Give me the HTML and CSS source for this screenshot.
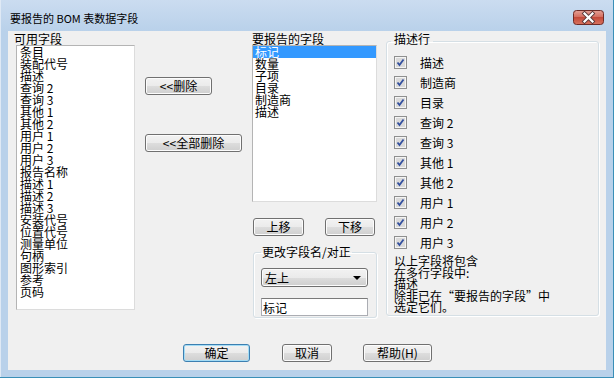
FILE: index.html
```html
<!DOCTYPE html>
<html lang="zh-CN">
<head>
    <meta charset="UTF-8">
    <title>要报告的 BOM 表数据字段</title>
    <link rel="stylesheet" href="styles.css">
</head>
<body>
    <div class="window">
        <div class="titlebar">
            <span class="title">要报告的 BOM 表数据字段</span>
            <button class="close-btn" type="button" aria-label="关闭">
                <svg width="31" height="15" viewBox="0 0 31 15">
                    <defs>
                        <linearGradient id="closeGrad" x1="0" y1="0" x2="0" y2="1">
                            <stop offset="0" stop-color="#e5a196"/>
                            <stop offset="0.45" stop-color="#d46f61"/>
                            <stop offset="0.5" stop-color="#c44a3a"/>
                            <stop offset="1" stop-color="#d8735f"/>
                        </linearGradient>
                    </defs>
                    <rect x="0.5" y="0.5" width="30" height="14" rx="3" fill="url(#closeGrad)" stroke="#6e2b26"/>
                    <path d="M11.5 3.5 L19.5 11.5 M19.5 3.5 L11.5 11.5" stroke="#5a3a3a" stroke-width="4" stroke-linecap="square"/>
                    <path d="M11.5 3.5 L19.5 11.5 M19.5 3.5 L11.5 11.5" stroke="#ffffff" stroke-width="2.2" stroke-linecap="square"/>
                </svg>
            </button>
        </div>

        <div class="client">
            <div class="main">
                <div class="col col-avail">
                    <div class="caption">可用字段</div>
                    <ul class="listbox avail-list">
                        <li>条目</li>
                        <li>装配代号</li>
                        <li>描述</li>
                        <li>查询 2</li>
                        <li>查询 3</li>
                        <li>其他 1</li>
                        <li>其他 2</li>
                        <li>用户 1</li>
                        <li>用户 2</li>
                        <li>用户 3</li>
                        <li>报告名称</li>
                        <li>描述 1</li>
                        <li>描述 2</li>
                        <li>描述 3</li>
                        <li>安装代号</li>
                        <li>位置代号</li>
                        <li>测量单位</li>
                        <li>句柄</li>
                        <li>图形索引</li>
                        <li>参考</li>
                        <li>页码</li>
                    </ul>
                </div>

                <div class="col col-actions">
                    <button class="btn btn-remove" type="button">&lt;&lt;删除</button>
                    <button class="btn btn-remove-all" type="button">&lt;&lt;全部删除</button>
                </div>

                <div class="col col-report">
                    <div class="caption">要报告的字段</div>
                    <ul class="listbox report-list">
                        <li class="selected">标记</li>
                        <li>数量</li>
                        <li>子项</li>
                        <li>目录</li>
                        <li>制造商</li>
                        <li>描述</li>
                    </ul>
                    <div class="move-row">
                        <button class="btn btn-up" type="button">上移</button>
                        <button class="btn btn-down" type="button">下移</button>
                    </div>
                    <fieldset class="group rename-group">
                        <legend>更改字段名/对正</legend>
                        <div class="combo">
                            <span>左上</span>
                            <span class="combo-arrow"></span>
                        </div>
                        <input class="textbox" type="text" value="标记">
                    </fieldset>
                </div>

                <fieldset class="group desc-group">
                    <legend>描述行</legend>
                    <ul class="check-list">
                        <li><svg class="check" width="13" height="13" viewBox="0 0 13 13"><rect x="0.5" y="0.5" width="12" height="12" fill="#f4f4f4" stroke="#8e8f8f"/><rect x="2" y="2" width="9" height="9" fill="#dadada"/><path d="M3.5 6.5 L5.5 9 L9.5 3.5" fill="none" stroke="#324f9e" stroke-width="1.8"/></svg>描述</li>
                        <li><svg class="check" width="13" height="13" viewBox="0 0 13 13"><rect x="0.5" y="0.5" width="12" height="12" fill="#f4f4f4" stroke="#8e8f8f"/><rect x="2" y="2" width="9" height="9" fill="#dadada"/><path d="M3.5 6.5 L5.5 9 L9.5 3.5" fill="none" stroke="#324f9e" stroke-width="1.8"/></svg>制造商</li>
                        <li><svg class="check" width="13" height="13" viewBox="0 0 13 13"><rect x="0.5" y="0.5" width="12" height="12" fill="#f4f4f4" stroke="#8e8f8f"/><rect x="2" y="2" width="9" height="9" fill="#dadada"/><path d="M3.5 6.5 L5.5 9 L9.5 3.5" fill="none" stroke="#324f9e" stroke-width="1.8"/></svg>目录</li>
                        <li><svg class="check" width="13" height="13" viewBox="0 0 13 13"><rect x="0.5" y="0.5" width="12" height="12" fill="#f4f4f4" stroke="#8e8f8f"/><rect x="2" y="2" width="9" height="9" fill="#dadada"/><path d="M3.5 6.5 L5.5 9 L9.5 3.5" fill="none" stroke="#324f9e" stroke-width="1.8"/></svg>查询 2</li>
                        <li><svg class="check" width="13" height="13" viewBox="0 0 13 13"><rect x="0.5" y="0.5" width="12" height="12" fill="#f4f4f4" stroke="#8e8f8f"/><rect x="2" y="2" width="9" height="9" fill="#dadada"/><path d="M3.5 6.5 L5.5 9 L9.5 3.5" fill="none" stroke="#324f9e" stroke-width="1.8"/></svg>查询 3</li>
                        <li><svg class="check" width="13" height="13" viewBox="0 0 13 13"><rect x="0.5" y="0.5" width="12" height="12" fill="#f4f4f4" stroke="#8e8f8f"/><rect x="2" y="2" width="9" height="9" fill="#dadada"/><path d="M3.5 6.5 L5.5 9 L9.5 3.5" fill="none" stroke="#324f9e" stroke-width="1.8"/></svg>其他 1</li>
                        <li><svg class="check" width="13" height="13" viewBox="0 0 13 13"><rect x="0.5" y="0.5" width="12" height="12" fill="#f4f4f4" stroke="#8e8f8f"/><rect x="2" y="2" width="9" height="9" fill="#dadada"/><path d="M3.5 6.5 L5.5 9 L9.5 3.5" fill="none" stroke="#324f9e" stroke-width="1.8"/></svg>其他 2</li>
                        <li><svg class="check" width="13" height="13" viewBox="0 0 13 13"><rect x="0.5" y="0.5" width="12" height="12" fill="#f4f4f4" stroke="#8e8f8f"/><rect x="2" y="2" width="9" height="9" fill="#dadada"/><path d="M3.5 6.5 L5.5 9 L9.5 3.5" fill="none" stroke="#324f9e" stroke-width="1.8"/></svg>用户 1</li>
                        <li><svg class="check" width="13" height="13" viewBox="0 0 13 13"><rect x="0.5" y="0.5" width="12" height="12" fill="#f4f4f4" stroke="#8e8f8f"/><rect x="2" y="2" width="9" height="9" fill="#dadada"/><path d="M3.5 6.5 L5.5 9 L9.5 3.5" fill="none" stroke="#324f9e" stroke-width="1.8"/></svg>用户 2</li>
                        <li><svg class="check" width="13" height="13" viewBox="0 0 13 13"><rect x="0.5" y="0.5" width="12" height="12" fill="#f4f4f4" stroke="#8e8f8f"/><rect x="2" y="2" width="9" height="9" fill="#dadada"/><path d="M3.5 6.5 L5.5 9 L9.5 3.5" fill="none" stroke="#324f9e" stroke-width="1.8"/></svg>用户 3</li>
                    </ul>
                    <p class="note">以上字段将包含<br>在多行字段中:<br>描述<br>除非已在“要报告的字段”中<br>选定它们。</p>
                </fieldset>
            </div>

            <div class="footer">
                <button class="btn btn-ok" type="button">确定</button>
                <button class="btn btn-cancel" type="button">取消</button>
                <button class="btn btn-help" type="button">帮助(H)</button>
            </div>
        </div>
    </div>
</body>
</html>
```

FILE: styles.css
```css
* {
    box-sizing: border-box;
}

body {
    margin: 0;
    font-family: "Noto Sans CJK SC", "Liberation Sans", sans-serif;
    font-size: 12px;
    color: #000;
}

.window {
    width: 614px;
    height: 378px;
    padding: 0 7px 7px 8px;
    background: linear-gradient(to bottom, #cbdcf0, #b9d1ea 31px, #b9d1ea);
    border-right: 1px solid #3a8fb7;
    border-bottom: 1px solid #3a8fb7;
    box-shadow: inset 1px 0 0 #dfe9f5;
}

.titlebar {
    height: 31px;
    display: flex;
    align-items: flex-start;
    justify-content: space-between;
}

.title {
    margin: 12px 0 0 2px;
    font-size: 11px;
    line-height: 13px;
}

.close-btn {
    margin: 10px 2px 0 0;
    padding: 0;
    width: 31px;
    height: 15px;
    border: none;
    background: none;
    display: block;
}

.close-btn svg {
    display: block;
}

.client {
    height: 339px;
    background-color: #f0f0f0;
}

.main {
    height: 313px;
    display: flex;
    align-items: flex-start;
    padding-left: 6px;
}

.col {
    display: flex;
    flex-direction: column;
}

.caption {
    margin-top: 2px;
    line-height: 12px;
    height: 12px;
    white-space: nowrap;
}

.listbox {
    margin: 0;
    padding: 0;
    list-style: none;
    background-color: #fff;
    border: 1px solid #b4b4b4;
    border-right-color: #dcdcdc;
    border-bottom-color: #dcdcdc;
}

.listbox li {
    line-height: 12px;
    height: 12px;
    white-space: nowrap;
}

.avail-list {
    margin-left: 2px;
    width: 119px;
    height: 265px;
}

.avail-list li {
    padding-left: 3px;
}

/* buttons */
.btn {
    font-family: inherit;
    font-size: 12px;
    line-height: 14px;
    height: 18px;
    padding: 0;
    color: #000;
    border: 1px solid #707070;
    border-radius: 3px;
    background: linear-gradient(to bottom, #f2f2f2 0%, #ebebeb 50%, #dddddd 51%, #cfcfcf 100%);
    box-shadow: inset 0 0 0 1px #fcfcfc;
}

.col-actions {
    margin-left: 10px;
    padding-top: 46px;
}

.btn-remove {
    width: 67px;
}

.btn-remove-all {
    width: 97px;
    margin-top: 39px;
}

.col-report {
    margin-left: 10px;
    width: 125px;
}

.report-list {
    width: 125px;
    height: 157px;
}

.report-list li {
    padding-left: 2px;
}

.report-list li.selected {
    background-color: #3399ff;
    color: #fff;
}

.move-row {
    display: flex;
    margin-top: 16px;
}

.btn-up {
    width: 51px;
    margin-left: 1px;
}

.btn-down {
    width: 50px;
    margin-left: 21px;
}

/* group boxes */
.group {
    margin: 0;
    min-width: 0;
    border: 1px solid #d5dfe5;
    border-radius: 3px;
    box-shadow: 1px 1px 0 #ffffff, inset 1px 1px 0 #ffffff;
}

.group legend {
    line-height: 12px;
    white-space: nowrap;
}

.rename-group {
    width: 124px;
    margin: 10px 0 0 1px;
    padding: 10px 0 1px 7px;
}

.rename-group legend {
    padding: 0 1px;
}

.combo {
    width: 107px;
    height: 19px;
    display: flex;
    align-items: center;
    justify-content: space-between;
    padding: 0 6px 0 3px;
    border: 1px solid #707070;
    border-radius: 3px;
    background: linear-gradient(to bottom, #f2f2f2 0%, #ebebeb 50%, #dddddd 51%, #cfcfcf 100%);
    box-shadow: inset 0 0 0 1px #fcfcfc;
}

.combo-arrow {
    width: 0;
    height: 0;
    border-left: 4px solid transparent;
    border-right: 4px solid transparent;
    border-top: 4px solid #000;
}

.textbox {
    display: block;
    margin-top: 11px;
    width: 107px;
    height: 18px;
    padding: 0 0 0 1px;
    font-family: inherit;
    font-size: 12px;
    border: 1px solid #abadb3;
    border-top-color: #7a7a7a;
    background-color: #fff;
}

.desc-group {
    width: 213px;
    margin: 2px 0 0 9px;
    padding: 3px 0 2px 4px;
}

.desc-group legend {
    padding: 0 3px 4px;
}

.check-list {
    margin: 0;
    padding: 0;
    list-style: none;
}

.check-list li {
    height: 20px;
    display: flex;
    align-items: center;
    padding-left: 3px;
    white-space: nowrap;
}

.check {
    display: block;
    flex-shrink: 0;
    margin-right: 13px;
}

.note {
    margin: 3px 0 0 3px;
    line-height: 11.5px;
    white-space: nowrap;
}

.footer {
    display: flex;
    padding-left: 175px;
}

.btn-ok {
    width: 67px;
    border-color: #3c7fb1;
    box-shadow: inset 0 0 0 1px #a4dcf5;
}

.btn-cancel {
    width: 50px;
    margin-left: 32px;
}

.btn-help {
    width: 69px;
    margin-left: 31px;
}
```
